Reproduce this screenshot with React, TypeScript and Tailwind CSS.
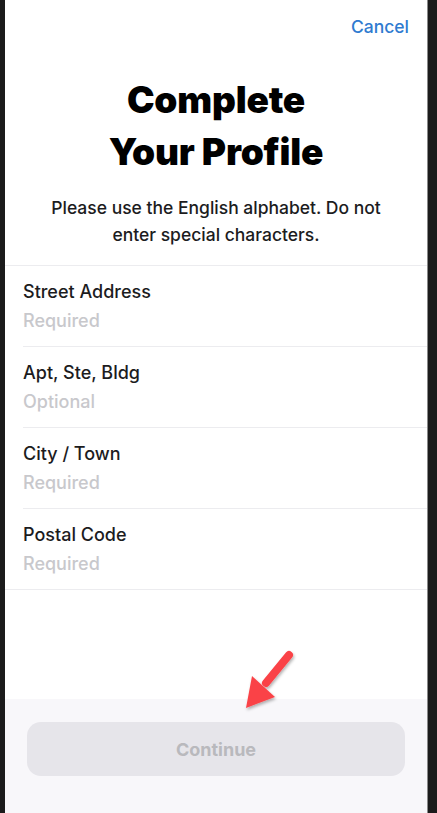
const fields = [
  { label: "Street Address", hint: "Required" },
  { label: "Apt, Ste, Bldg", hint: "Optional" },
  { label: "City / Town", hint: "Required" },
  { label: "Postal Code", hint: "Required" },
];

function Arrow() {
  return (
    <svg
      className="absolute left-[236px] top-[646px] pointer-events-none"
      width="64"
      height="70"
      viewBox="0 0 64 70"
    >
      <defs>
        <filter id="sh" x="-30%" y="-30%" width="160%" height="160%">
          <feDropShadow dx="1" dy="2" stdDeviation="1.5" floodColor="#000" floodOpacity="0.3" />
        </filter>
      </defs>
      <g filter="url(#sh)" fill="#fa4347">
        <path d="M53 9 L30 37" stroke="#fa4347" strokeWidth="8" strokeLinecap="round" />
        <path d="M16 30 L39 51 L10 62 Z" />
      </g>
    </svg>
  );
}

export default function App() {
  return (
    <div
      className="relative flex h-[813px] w-[437px] bg-[#1b1b1b]"
      style={{ fontFamily: "Inter, 'Liberation Sans', sans-serif" }}
    >
      <div className="ml-[5px] flex w-[423px] flex-col border-r border-[#8a8a8a] bg-white">
        <div className="flex justify-end pr-[18px] pt-[14px]">
          <span className="text-[17.5px] font-medium leading-[26px] text-[#2f7bd0]">Cancel</span>
        </div>

        <h1 className="mt-[34px] text-center text-[37px] font-black leading-[52px] tracking-[-0.2px] text-black">
          Complete
          <br />
          Your Profile
        </h1>

        <p className="mt-[16px] px-[36px] text-center text-[17.5px] font-medium leading-[27px] text-[#1c1c1e]">
          Please use the English alphabet. Do not enter special characters.
        </p>

        <div className="mt-[17px] border-y border-[#ececef]">
          {fields.map((f, i) => (
            <div key={f.label} className={i > 0 ? "pl-[18px]" : ""}>
              <div
                className={`pt-[15px] pb-[14px] ${
                  i > 0 ? "border-t border-[#ececef]" : "pl-[18px]"
                }`}
              >
                <div className="text-[18px] font-medium leading-[22px] text-[#1c1c1e]">{f.label}</div>
                <div className="mt-[7px] text-[18px] font-medium leading-[22px] text-[#c8c8cc]">{f.hint}</div>
              </div>
            </div>
          ))}
        </div>

        <div className="flex-1" />

        <div className="h-[114px] bg-[#f8f7fa] px-[22px] pt-[23px]">
          <button className="flex h-[54px] w-full items-center justify-center rounded-[14px] bg-[#e6e5ea] text-[18px] font-bold text-[#b9b9bd]">
            Continue
          </button>
        </div>
      </div>
      <Arrow />
    </div>
  );
}
